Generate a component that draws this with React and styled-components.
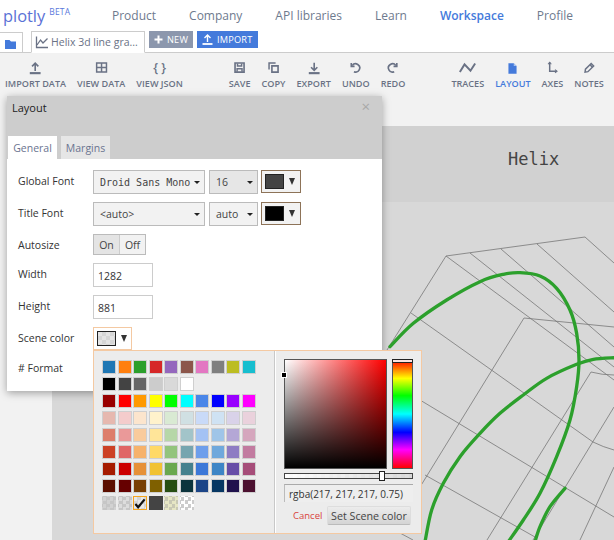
import React from "react";
import styled, { createGlobalStyle } from "styled-components";

const Global = createGlobalStyle`
  html, body { margin: 0; padding: 0; background: #fff; }
  * { box-sizing: border-box; }
  body { font-family: "Open Sans", "Liberation Sans", sans-serif; }
`;

const Page = styled.div`
  position: relative; width: 614px; height: 540px; overflow: hidden;
  display: flex; flex-direction: column; background: #fff;
`;
const Nav = styled.header`
  display: flex; align-items: center; height: 31px; flex: none;
`;
const Logo = styled.div`
  width: 112px; flex: none; padding-left: 3px; display: flex; align-items: flex-start;
  font-size: 16.4px; line-height: 31px; height: 31px;
  color: #5b72d6; 
  sup { font-size: 8.5px; line-height: 10px; margin: 7px 0 0 4px; color: #5b78dc; letter-spacing: .2px; }
`;
const NavLinks = styled.nav`display: flex; gap: 33px;`;
const NavLink = styled.span`
  font-size: 12px; line-height: 31px; white-space: nowrap;
  font-weight: ${p => (p.$active ? 600 : 400)};
  color: ${p => (p.$active ? "#447adb" : "#6e7a8e")};
`;
const TabRow = styled.div`
  display: flex; height: 22px; flex: none; border-bottom: 1px solid #ccc; align-items: flex-start;
`;
const FolderTab = styled.div`
  width: 23px; height: 21px; margin-top: 1px; display: flex; align-items: center; justify-content: center;
  border-right: 1px solid #ccc; border-top: 1px solid #ccc; padding-top: 2px;
`;
const DocTab = styled.div`
  margin-left: 8px; width: 114px; height: 22px; display: flex; align-items: center; gap: 2px; padding-left: 3px;
  border: 1px solid #ccc; border-bottom: 1px solid #fff;
  background: #fff; font-size: 10.5px; color: #6a7285; white-space: nowrap;
`;
const NewButton = styled.div`
  margin-left: 4px; height: 17px; display: flex; align-items: center; gap: 4px; flex: none;
  width: ${p => p.$w}px; padding-left: 5px; color: #fff; font-size: 9.2px; letter-spacing: .2px; font-weight: 400;
  background: ${p => p.$bg};
`;
const Toolbar = styled.div`
  height: 73px; flex: none; background: #f2f2f2; display: flex; gap: 46px; padding: 6px 0 0 5px;
`;
const ToolGroup = styled.div`display: flex; gap: 11px;`;
const Tool = styled.div`
  display: flex; flex-direction: column; align-items: center; height: 32px;
  font-size: 9.1px; font-weight: 600; white-space: nowrap; line-height: 12px;
  color: ${p => (p.$active ? "#447adb" : "#6a7285")};
`;
const ToolIcon = styled.div`
  height: 18px; display: flex; align-items: center; justify-content: center; margin-bottom: 1px;
  font-size: 12.5px; font-weight: 600; color: #6a7285; white-space: pre;
`;
const Main = styled.div`flex: 1; display: flex; min-height: 0;`;
const Side = styled.div`width: 52px; background: #f2f2f2; flex: none;`;
const Canvas = styled.div`flex: 1; display: flex; flex-direction: column; min-width: 0; background: #d8d8d8;`;
const TitleBand = styled.div`
  height: 76px; flex: none; background: #d1d1d1; padding: 22px 0 0 456px;
  font-family: "DejaVu Sans Mono", "Liberation Mono", monospace; font-size: 17px; line-height: 22px; color: #444;
`;
const PlotSvg = styled.svg`display: block; width: 562px; height: 338px;`;

const Modal = styled.section`
  position: absolute; left: 7px; top: 96px; width: 375px; height: 295px; background: #fff;
  box-shadow: 0 2px 8px rgba(0,0,0,.35);
`;
const ModalHead = styled.div`
  height: 63px; background: #cdcdcd; display: flex; flex-direction: column; justify-content: space-between;
  position: relative;
`;
const ModalTitle = styled.div`
  font-size: 11px; font-weight: 400; color: #222; padding: 4px 0 0 5px; line-height: 15px;
`;
const Close = styled.span`
  position: absolute; right: 12px; top: 3px; font-size: 15px; line-height: 15px; color: #a8a8a8;
`;
const Tabs = styled.div`display: flex; gap: 4px; padding-left: 1px;`;
const Tab = styled.div`
  height: 23px; width: 49px; text-align: center; font-size: 10.5px; line-height: 25px; color: #6a7490;
  background: ${p => (p.$active ? "#fff" : "#e6e6e6")};
`;
const Form = styled.div`
  display: flex; flex-direction: column; padding: 11px 0 0 11px; position: relative;
`;
const Row = styled.div`
  display: flex; align-items: center; gap: 4px; height: 24px; margin-bottom: ${p => p.$mb ?? 8}px;
`;
const Label = styled.div`
  width: 71px; margin-top: -2px; flex: none; font-size: 10.5px; color: #333; white-space: nowrap;
`;
const Select = styled.div`
  width: ${p => p.$w}px; height: 24px; flex: none; display: flex; align-items: center; justify-content: space-between;
  padding: 0 4px 0 6px; border: 1px solid #bbb; font-size: 10.5px; color: #444; white-space: nowrap;
  background: ${p => p.$bg || "#f2f2f2"};
  font-family: ${p => (p.$mono ? '"DejaVu Sans Mono", "Liberation Mono", monospace' : "inherit")};
  ${p => (p.$mono ? "font-size: 10px;" : "")}
`;
const Caret = styled.i`
  width: 0; height: 0; border-left: 3px solid transparent; border-right: 3px solid transparent;
  border-top: 3px solid #222; flex: none;
`;
const ColorBtn = styled.div`
  width: ${p => p.$w || 40}px; height: 23px; flex: none; display: flex; align-items: center; gap: 4px; padding-left: 3px;
  border: 1px solid ${p => p.$border}; background: ${p => p.$bg || "#f2f2f2"};
  margin: -1px 0 0 ${p => p.$ml || 0}px;
`;
const Swatch = styled.div`
  width: 19px; height: 15px; border: 1px solid #222; background: ${p => p.$bg};
  background-size: 8px 8px;
`;
const DownTri = styled.span`
  width: 0; height: 0; border-left: 3.5px solid transparent; border-right: 3.5px solid transparent;
  border-top: 7px solid #333; margin-left: 1px;
`;
const Toggle = styled.div`
  display: flex; width: 53px; height: 21px; border: 1px solid #bbb; flex: none; margin-top: -3px;
`;
const ToggleBtn = styled.div`
  flex: 26; text-align: center; font-size: 10.5px; line-height: 20px; color: #444;
  background: ${p => (p.$on ? "#e4e4e4" : "#f2f2f2")};
  & + & { border-left: 1px solid #ccc; }
`;
const NumInput = styled.div`
  width: 60px; height: 24px; border: 1px solid #ccc; padding-left: 4px; font-size: 10.5px; line-height: 24px; color: #333;
  flex: none; background: #fff;
`;

const Popover = styled.div`
  position: absolute; left: 86px; top: 254px; width: 329px; height: 184px; background: #ececec;
  border: 1px solid #f4c9a2; display: flex;
`;
const PaletteSide = styled.div`
  width: 181px; flex: none; padding: 9px 0 0 8px; border-right: 1px solid #c8c8c8;
  box-shadow: 1px 0 0 #fff;
`;
const Palette = styled.div`
  display: grid; grid-template-columns: repeat(10, 14px); grid-auto-rows: 14px; column-gap: 1.55px; row-gap: 3px;
`;
const Cell = styled.div`
  width: 14px; height: 14px; border: 1.5px solid ${p => (p.$sel ? "#f5a51f" : p.$noBorder ? "transparent" : "#cfcfcf")};
  background: ${p => p.$bg}; background-size: 7px 7px; background-clip: ${p => (p.$noBorder ? "border-box" : "padding-box")};
  display: flex; align-items: center; justify-content: center;
`;
const PickerSide = styled.div`
  flex: 1; padding: 8px 0 0 9px; display: flex; flex-direction: column;
`;
const Spectrum = styled.div`display: flex; gap: 5px; height: 110px;`;
const Sat = styled.div`
  position: relative; width: 103px; height: 110px; border: 1px solid #555;
  background: linear-gradient(to top, #000, transparent), linear-gradient(to right, #fff, #f00);
`;
const SatDot = styled.span`
  position: absolute; left: -3px; top: 13px; width: 4px; height: 4px; background: #000; outline: 1px solid #fff;
`;
const Hue = styled.div`
  position: relative; width: 21px; height: 110px; border: 1px solid #555;
  background: linear-gradient(#f00, #ff0 17%, #0f0 33%, #0ff 50%, #00f 67%, #f0f 83%, #f00);
`;
const HueHandle = styled.span`
  position: absolute; left: -1px; top: -1px; width: 21px; height: 4px; background: #fbe3e3; border: 1px solid #222;
`;
const Alpha = styled.div`
  position: relative; width: 129px; height: 6px; margin-top: 4px; border: 1px solid #444; flex: none;
  background: linear-gradient(to right, rgba(255,255,255,.95), rgba(217,217,217,.9)), repeating-conic-gradient(#ccc 0 25%, #fff 0 50%) 0 0 / 8px 8px;
`;
const AlphaHandle = styled.span`
  position: absolute; left: 94px; top: -3px; width: 6px; height: 10px; background: #fff; border: 1px solid #222;
`;
const RgbaField = styled.div`
  width: 129px; height: 18px; margin-top: 5px; flex: none; border-top: 1px solid #aaa; border-left: 1px solid #bbb;
  font-size: 10px; line-height: 18px; padding-left: 4px; color: #333; white-space: nowrap; background: #eee;
`;
const Actions = styled.div`display: flex; align-items: center; margin-top: 4px; padding-left: 9px; gap: 5px;`;
const CancelLink = styled.span`font-size: 9.5px; color: #d9433c; width: 29px; white-space: nowrap;`;
const SetButton = styled.div`
  width: 84px; height: 19px; border-radius: 2px; text-align: center; font-size: 10.7px; line-height: 18px; color: #444; white-space: nowrap;
  background: linear-gradient(#ececec, #d4d4d4); border: 1px solid #ddd; border-bottom-color: #bbb;
`;

const Ic = ({ children, w = 16, h = 16, stroke = "#6a7285", sw = 1.8, scale = 0.82 }) => (
  <svg width={w * scale} height={h * scale} viewBox={`0 0 ${w} ${h}`} fill="none" stroke={stroke} strokeWidth={sw}>{children}</svg>
);

const PAL = [
  "#1f77b4 #ff7f0e #2ca02c #d62728 #9467bd #8c564b #e377c2 #7f7f7f #bcbd22 #17becf",
  "#000000 #434343 #666666 #cccccc #d9d9d9 #ffffff",
  "#980000 #ff0000 #ff9900 #ffff00 #00ff00 #00ffff #4a86e8 #0000ff #9900ff #ff00ff",
  "#e6b8af #f4cccc #fce5cd #fff2cc #d9ead3 #d0e0e3 #c9daf8 #cfe2f3 #d9d2e9 #ead1dc",
  "#dd7e6b #ea9999 #f9cb9c #ffe599 #b6d7a8 #a2c4c9 #a4c2f4 #9fc5e8 #b4a7d6 #d5a6bd",
  "#cc4125 #e06666 #f6b26b #ffd966 #93c47d #76a5af #6d9eeb #6fa8dc #8e7cc3 #c27ba0",
  "#a61c00 #cc0000 #e69138 #f1c232 #6aa84f #45818e #3c78d8 #3d85c6 #674ea7 #a64d79",
  "#5b0f00 #660000 #783f04 #7f6000 #274e13 #0c343d #1c4587 #073763 #20124d #4c1130",
];
const check = (a, b) => `repeating-conic-gradient(${a} 0 25%, ${b} 0 50%)`;
const LAST = [
  { bg: check("#c6c6c6", "#d2d2d2"), nb: true },
  { bg: check("#c6c6c6", "#dcdcdc"), nb: true },
  { bg: check("#d4d4d4", "#e8e8e8"), sel: true },
  { bg: "#444444", nb: true },
  { bg: check("#e6e6c4", "#c8c8b4"), nb: true },
  { bg: check("#ffffff", "#cccccc"), nb: true },
];

const GRID = [
  "M446 256L585 237L614 263", "M446 256L387 350", "M446 256L614 380", "M470 253L614 367", "M501 249L614 347",
  "M537 244L614 312", "M411 313L593 442Q603 447 614 450", "M524 318L614 327", "M524 318L420 487", "M591 372Q602 375 614 375",
  "M591 372L487 540", "M614 407L533 540", "M420 400L614 517", "M425 475L535 537", "M614 467L580 540", "M400 533L413 540",
];

const smooth = pts => {
  let d = `M${pts[0][0]} ${pts[0][1]}`;
  for (let i = 0; i < pts.length - 1; i++) {
    const p0 = pts[Math.max(i - 1, 0)], p1 = pts[i], p2 = pts[i + 1], p3 = pts[Math.min(i + 2, pts.length - 1)];
    d += `C${p1[0] + (p2[0] - p0[0]) / 6} ${p1[1] + (p2[1] - p0[1]) / 6} ${p2[0] - (p3[0] - p1[0]) / 6} ${p2[1] - (p3[1] - p1[1]) / 6} ${p2[0]} ${p2[1]}`;
  }
  return d;
};
const CURVES = [
  [[30,680],[100,610],[200,540],[300,485],[370,463],[420,458],[480,468],[530,505],[570,570],[590,640],[597,720],[590,800],[570,900],[530,1010],[480,1120],[430,1200],[385,1265]],
  [[705,713],[640,718],[590,733],[500,775],[430,825],[360,880],[300,940],[240,1010],[190,1090],[155,1170],[135,1265]],
  [[555,1105],[510,1160],[480,1220],[465,1265]],
];

const tools = [
  [
    ["IMPORT DATA", <Ic key="a" scale={0.9}><path d="M8 11V3M4.5 6L8 2.5L11.5 6" /><path d="M2 13.5H14" strokeWidth="2.4" /></Ic>],
    ["VIEW DATA", <Ic key="b"><path d="M2 2.5H14V13.5H2ZM8 2.5V13.5M2 8H14" /></Ic>],
    ["VIEW JSON", "{ }"],
  ],
  [
    ["SAVE", <Ic key="c"><path d="M2.5 2.5H13.5V13.5H2.5Z" strokeWidth="2" /><path d="M5.5 3V6H10.5V3M5 13V9.5H11V13" /></Ic>],
    ["COPY", <Ic key="d"><path d="M2.5 10.5V2.5H10.5" /><path d="M6 6H13.5V13.5H6Z" strokeWidth="2" /></Ic>],
    ["EXPORT", <Ic key="e" scale={0.9}><path d="M8 2V10M4.5 7L8 10.5L11.5 7" /><path d="M2 13.5H14" strokeWidth="2.4" /></Ic>],
    ["UNDO", <Ic key="f" sw={2}><path d="M4 5.5A5 5 0 1 1 6 13" /><path d="M2.8 2.5V6.5H6.8" /></Ic>],
    ["REDO", <Ic key="g" sw={2}><path d="M12 5.5A5 5 0 1 0 10 13" /><path d="M13.2 2.5V6.5H9.2" /></Ic>],
  ],
  [
    ["TRACES", <Ic key="h" w={20} sw={2.3} scale={0.85}><path d="M1 13L6.5 4L13.5 11.5L19 3" /></Ic>],
    ["LAYOUT", <svg key="i" width="13" height="13" viewBox="0 0 16 16"><path d="M3 1.5H9.5L13 5V14.5H3Z" fill="#447adb" /><path d="M9.5 1.5V5H13" fill="#a9c4f0" /></svg>, true],
    ["AXES", <Ic key="j"><path d="M4.5 1.5V12.5H13" /><path d="M2.5 4L4.5 1.5L6.5 4M11 10.5L13.5 12.5L11 14.5" strokeWidth="1.3" /></Ic>],
    ["NOTES", <Ic key="k"><path d="M2.5 13.5L3 10L10 3L13 6L6 13Z" /><path d="M8.5 4.5L11.5 7.5" /></Ic>],
  ],
];

export default function App() {
  return (
    <Page>
      <Global />
      <Nav>
        <Logo>plotly<sup>BETA</sup></Logo>
        <NavLinks>
          <NavLink>Product</NavLink>
          <NavLink>Company</NavLink>
          <NavLink>API libraries</NavLink>
          <NavLink>Learn</NavLink>
          <NavLink $active>Workspace</NavLink>
          <NavLink>Profile</NavLink>
        </NavLinks>
      </Nav>
      <TabRow>
        <FolderTab>
          <svg width="12" height="10" viewBox="0 0 12 10"><path d="M0 1H4.5L6 2.5H11V10H0Z" fill="#447adb" /></svg>
        </FolderTab>
        <DocTab>
          <Ic w={14} h={14} sw={1.3} scale={1}><path d="M1.5 1.5V12.5H13" /><path d="M2 10L5.5 5L8 8L12.5 3.5" /></Ic>
          Helix 3d line gra...
        </DocTab>
        <NewButton $w={44} $bg="#8c97ad">
          <svg width="9" height="9" viewBox="0 0 9 9"><path d="M4.5 0.5V8.5M0.5 4.5H8.5" stroke="#fff" strokeWidth="2" /></svg>
          NEW
        </NewButton>
        <NewButton $w={61} $bg="#447adb">
          <svg width="11" height="11" viewBox="0 0 11 11" fill="none" stroke="#fff"><path d="M5.5 8V1.5M2.5 4L5.5 1L8.5 4" strokeWidth="1.4" /><path d="M0.5 10H10.5" strokeWidth="1.8" /></svg>
          IMPORT
        </NewButton>
      </TabRow>
      <Toolbar>
        {tools.map((g, i) => (
          <ToolGroup key={i}>
            {g.map(([label, icon, active]) => (
              <Tool key={label} $active={active}>
                <ToolIcon>{icon}</ToolIcon>
                {label}
              </Tool>
            ))}
          </ToolGroup>
        ))}
      </Toolbar>
      <Main>
        <Side />
        <Canvas>
          <TitleBand>Helix</TitleBand>
          <PlotSvg viewBox="52 202 562 338" fill="none">
            {GRID.map(d => <path key={d} d={d} stroke="#777" strokeWidth="0.8" />)}
            <g transform="translate(380 120) scale(0.33333)" stroke="#2ca02c" strokeWidth="10" strokeLinecap="round">
              {CURVES.map((c, i) => <path key={i} d={smooth(c)} />)}
            </g>
          </PlotSvg>
        </Canvas>
      </Main>

      <Modal>
        <ModalHead>
          <ModalTitle>Layout</ModalTitle>
          <Close>×</Close>
          <Tabs>
            <Tab $active>General</Tab>
            <Tab>Margins</Tab>
          </Tabs>
        </ModalHead>
        <Form>
          <Row>
            <Label>Global Font</Label>
            <Select $w={112} $mono>Droid Sans Mono<Caret /></Select>
            <Select $w={49} $bg="#e6e6e6">16<Caret /></Select>
            <ColorBtn $ml={-1} $border="#8d7358"><Swatch $bg="#444" /><DownTri /></ColorBtn>
          </Row>
          <Row>
            <Label>Title Font</Label>
            <Select $w={112}>&lt;auto&gt;<Caret /></Select>
            <Select $w={49}>auto<Caret /></Select>
            <ColorBtn $ml={-1} $border="#8d7358"><Swatch $bg="#000" /><DownTri /></ColorBtn>
          </Row>
          <Row $mb={5}>
            <Label>Autosize</Label>
            <Toggle><ToggleBtn $on>On</ToggleBtn><ToggleBtn>Off</ToggleBtn></Toggle>
          </Row>
          <Row>
            <Label>Width</Label>
            <NumInput>1282</NumInput>
          </Row>
          <Row>
            <Label>Height</Label>
            <NumInput>881</NumInput>
          </Row>
          <Row $mb={6}>
            <Label>Scene color</Label>
            <ColorBtn $w={39} $border="#f4c9a2" $bg="#fff">
              <Swatch $bg={check("#d6d6d6", "#e4e4e4")} />
              <DownTri />
            </ColorBtn>
          </Row>
          <Row>
            <Label># Format</Label>
          </Row>
        </Form>
        <Popover>
          <PaletteSide>
            <Palette>
              {PAL.flatMap((r, i) => {
                const cells = r.split(" ").map((c, j) => <Cell key={`${i}-${j}`} $bg={c} />);
                for (let k = cells.length; k < 10; k++) cells.push(<span key={`${i}-e${k}`} />);
                return cells;
              })}
              {LAST.map((c, i) => (
                <Cell key={i} $bg={c.bg} $noBorder={c.nb} $sel={c.sel}>
                  {c.sel && (
                    <svg width="13" height="11" viewBox="0 0 13 11" fill="none"><path d="M1.5 6L4.5 9.5L11.5 1" stroke="#111" strokeWidth="2.4" /></svg>
                  )}
                </Cell>
              ))}
            </Palette>
          </PaletteSide>
          <PickerSide>
            <Spectrum>
              <Sat><SatDot /></Sat>
              <Hue><HueHandle /></Hue>
            </Spectrum>
            <Alpha><AlphaHandle /></Alpha>
            <RgbaField>rgba(217, 217, 217, 0.75)</RgbaField>
            <Actions>
              <CancelLink>Cancel</CancelLink>
              <SetButton>Set Scene color</SetButton>
            </Actions>
          </PickerSide>
        </Popover>
      </Modal>
    </Page>
  );
}
